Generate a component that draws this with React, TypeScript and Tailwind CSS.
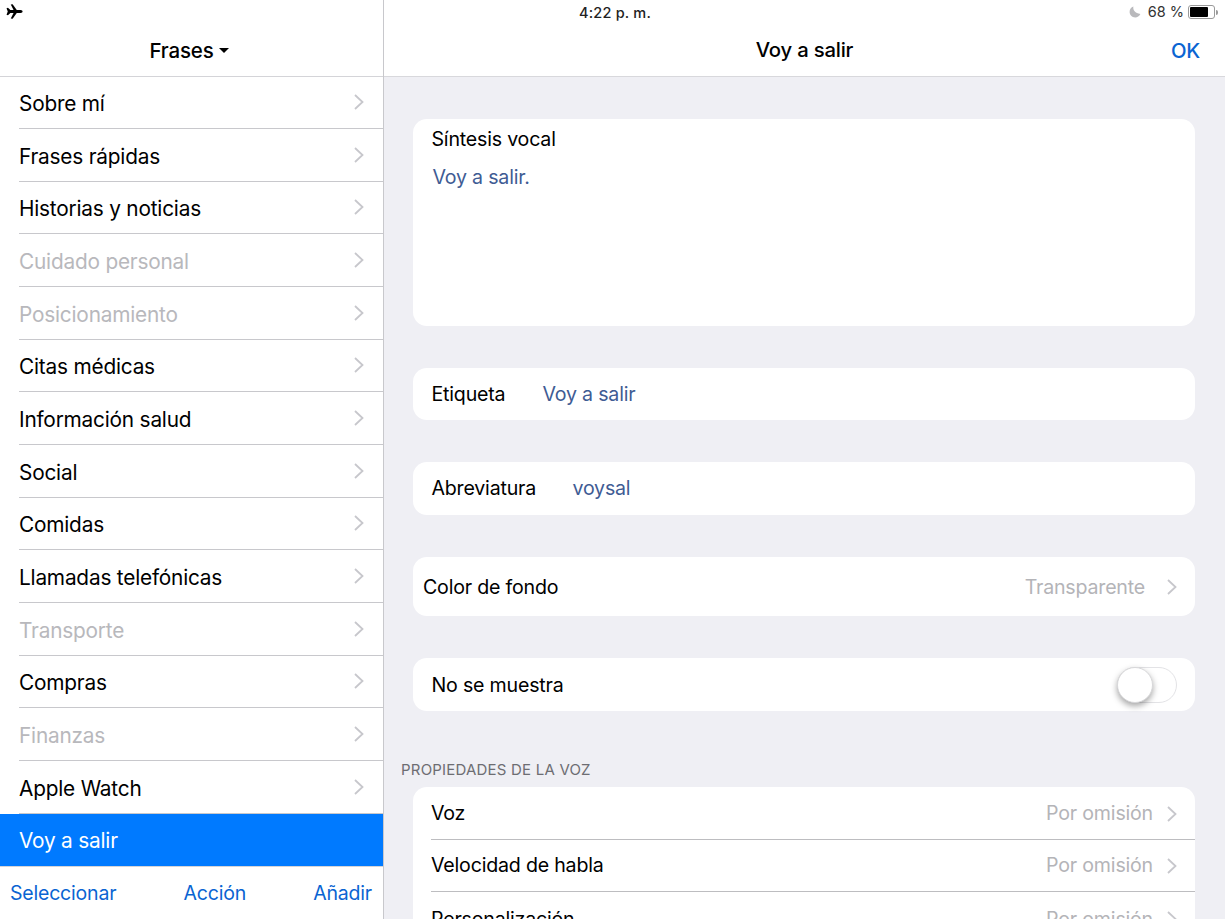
const phrases = [
  { label: 'Sobre mí' },
  { label: 'Frases rápidas' },
  { label: 'Historias y noticias' },
  { label: 'Cuidado personal', muted: true },
  { label: 'Posicionamiento', muted: true },
  { label: 'Citas médicas' },
  { label: 'Información salud' },
  { label: 'Social' },
  { label: 'Comidas' },
  { label: 'Llamadas telefónicas' },
  { label: 'Transporte', muted: true },
  { label: 'Compras' },
  { label: 'Finanzas', muted: true },
  { label: 'Apple Watch' },
]

function Chevron() {
  return (
    <svg viewBox="0 0 10 16" className="h-[16px] w-[10px] shrink-0" fill="none" stroke="#c7c7cc" strokeWidth="1.8">
      <path d="M1 1 L8.5 8 L1 15" />
    </svg>
  )
}

function Plane() {
  return (
    <svg viewBox="0 0 18 16" className="h-[15px] w-[17px]" fill="#000">
      <path d="M0.5 4.5 L2 4 L4.6 6.4 L8 6.4 L5 0.5 L7 0.3 L11.4 6.4 L15.5 6.4 C17 6.4 17.6 7.2 17.6 8 C17.6 8.8 17 9.6 15.5 9.6 L11.4 9.6 L7 15.7 L5 15.5 L8 9.6 L4.6 9.6 L2 12 L0.5 11.5 L1.8 8 Z" />
    </svg>
  )
}

function Moon() {
  return (
    <svg viewBox="0 0 12 12" className="h-[12px] w-[12px]" fill="#b9b9bc">
      <path d="M4.4 0.6 C3.6 3.9 6.2 7.4 11.4 8 C10.3 10.2 8.3 11.4 6.2 11.4 C3 11.4 0.6 8.9 0.6 6 C0.6 3.5 2.1 1.4 4.4 0.6 Z" />
    </svg>
  )
}

function Battery() {
  return (
    <div className="flex items-center">
      <div className="flex h-[14px] w-[27px] items-center rounded-[3px] border border-[#9a9a9a] p-[1px]">
        <div className="h-full w-[18px] rounded-[1px] bg-black" />
      </div>
      <div className="ml-[1px] h-[5px] w-[2px] rounded-r-sm bg-[#9a9a9a]" />
    </div>
  )
}

function ValueRow({ label, value, last }: { label: string; value: string; last?: boolean }) {
  return (
    <div className={`flex h-[52.6px] items-center justify-between pr-[18px] pt-[1.5px] ${last ? '' : 'border-b border-[#bdbdc0]'}`}>
      <span>{label}</span>
      <span className="flex items-center gap-[14px] text-[#b4b4b8]">
        {value}
        <Chevron />
      </span>
    </div>
  )
}

export default function App() {
  return (
    <div className="flex h-[919px] w-[1225px] overflow-hidden bg-white font-['Inter',sans-serif] text-black">
      {/* Left list */}
      <div className="flex w-[384px] shrink-0 flex-col border-r border-[#c8c8cc] text-[20.8px] tracking-[-0.2px]">
        <div className="h-[25px] shrink-0 pl-[6px] pt-[4px]">
          <Plane />
        </div>
        <div className="flex h-[51.5px] shrink-0 items-center justify-center gap-[6px] border-b border-[#d4d4d8] pr-[4px] pt-[1.5px] text-[20.5px] font-medium">
          <span>Frases</span>
          <span className="mb-[1px] h-0 w-0 border-x-[5px] border-t-[5px] border-x-transparent border-t-black" />
        </div>
        <div className="shrink-0">
          {phrases.map((p) => (
            <div key={p.label} className="pl-[19px]">
              <div className="flex h-[52.67px] items-center justify-between border-b border-[#c8c8cc] pr-[19px] pt-[2.5px]">
                <span className={p.muted ? 'text-[#b8b8bc]' : ''}>{p.label}</span>
                <span className="-mt-[3px]"><Chevron /></span>
              </div>
            </div>
          ))}
          <div className="flex h-[52.67px] items-center bg-[#007aff] pl-[19px] pt-[1px] text-white">Voy a salir</div>
        </div>
        <div className="flex flex-1 items-center justify-between border-t border-[#d4d4d8] pl-[10px] pr-[11px] pt-[1px] text-[19.5px] text-[#0a64d2]">
          <span>Seleccionar</span>
          <span>Acción</span>
          <span>Añadir</span>
        </div>
      </div>

      {/* Right detail */}
      <div className="flex min-w-0 flex-1 flex-col text-[19.6px] tracking-[-0.2px]">
        <div className="relative h-[25px] shrink-0 bg-white">
          <div className="pr-[379px] pt-[2px] text-center text-[14.5px] font-medium tracking-[0.2px] text-[#222]">4:22 p. m.</div>
          <div className="absolute right-[7px] top-[5px] flex items-center gap-[7px] text-[14.5px] leading-none tracking-[0px] text-[#333]">
            <Moon />
            <span>68 %</span>
            <span className="-ml-[3px]"><Battery /></span>
          </div>
        </div>
        <div className="relative flex h-[52px] shrink-0 items-center justify-center border-b border-[#d8d8dc] text-[20.3px] font-medium">
          <span>Voy a salir</span>
          <span className="absolute right-[25px] top-[11px] text-[#0a64d2]">OK</span>
        </div>
        <div className="flex flex-1 flex-col bg-[#efeff4] pl-[29px] pr-[30px] pt-[42px]">
          <div className="h-[207px] shrink-0 rounded-[14px] bg-white pl-[18.5px] pt-[5px]">
            <div className="leading-[30px]">Síntesis vocal</div>
            <div className="mt-[8px] pl-[1px] leading-[30px] text-[#3f5c94]">Voy a salir.</div>
          </div>
          <div className="mt-[42px] flex h-[52px] shrink-0 items-center rounded-[14px] bg-white pl-[18.5px] pt-[1px]">
            <span className="w-[111px]">Etiqueta</span>
            <span className="text-[#3f5c94]">Voy a salir</span>
          </div>
          <div className="mt-[42px] flex h-[53px] shrink-0 items-center rounded-[14px] bg-white pl-[18.5px] pt-[1px]">
            <span className="w-[141px]">Abreviatura</span>
            <span className="text-[#3f5c94]">voysal</span>
          </div>
          <div className="mt-[42px] flex h-[59px] shrink-0 items-center justify-between rounded-[14px] bg-white pl-[10px] pr-[18px] pt-[2px]">
            <span>Color de fondo</span>
            <span className="flex items-center gap-[22px] text-[#b4b4b8]">
              Transparente
              <Chevron />
            </span>
          </div>
          <div className="mt-[42px] flex h-[53px] shrink-0 items-center justify-between rounded-[14px] bg-white pl-[18.5px] pr-[18px]">
            <span className="pt-[2px]">No se muestra</span>
            <div className="relative h-[36px] w-[60px] rounded-full border border-[#e3e3e6]">
              <div className="absolute -left-[1px] -top-[1px] h-[36px] w-[36px] rounded-full border border-[#d8d8da] bg-white shadow-[0_3px_6px_rgba(0,0,0,0.35)]" />
            </div>
          </div>
          <div className="mt-[48px] pt-[1px] text-[15px] leading-[20px] tracking-[0.2px] text-[#6d6d72]">
            <span className="-ml-[12px]">PROPIEDADES DE LA VOZ</span>
          </div>
          <div className="mt-[7px] rounded-t-[14px] bg-white pl-[18px]">
            <ValueRow label="Voz" value="Por omisión" />
            <ValueRow label="Velocidad de habla" value="Por omisión" />
            <ValueRow label="Personalización" value="Por omisión" last />
          </div>
        </div>
      </div>
    </div>
  )
}
